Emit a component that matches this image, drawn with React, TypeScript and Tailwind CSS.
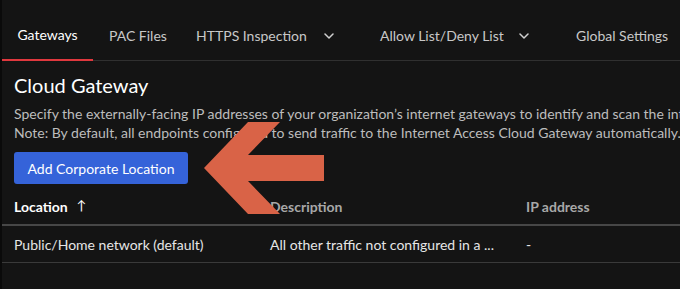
import React from "react";

function Chevron() {
  return (
    <svg width="10" height="6" viewBox="0 0 10 6" fill="none" className="block">
      <path d="M1 1l4 4 4-4" stroke="#d0d0d0" strokeWidth="1.5" strokeLinecap="round" strokeLinejoin="round" />
    </svg>
  );
}

export default function App() {
  return (
    <div
      className="relative w-[680px] h-[289px] overflow-hidden bg-[#141414] border-l-2 border-[#0a0a0a] text-[14px]"
      style={{ fontFamily: "Lato, 'Noto Sans', sans-serif" }}
    >
      {/* Tabs */}
      <div className="flex h-[61px] border-b border-[#303030] whitespace-nowrap">
        <div className="flex items-center justify-center w-[91px] pt-[10px] border-b-2 border-[#e0383e] text-white -mb-px">
          Gateways
        </div>
        <div className="flex items-center w-[87px] pt-[10px] pl-4 text-[#c8c8c8]">PAC Files</div>
        <div className="flex items-center w-[184px] pt-[10px] pl-4 text-[#c8c8c8]">
          <span className="w-[128px]">HTTPS Inspection</span>
          <span className="pt-[1px]"><Chevron /></span>
        </div>
        <div className="flex items-center w-[196px] pt-[10px] pl-4 text-[#c8c8c8]">
          <span className="w-[139px]">Allow List/Deny List</span>
          <span className="pt-[1px]"><Chevron /></span>
        </div>
        <div className="flex items-center pt-[10px] pl-4 text-[#c8c8c8]">Global Settings</div>
      </div>

      {/* Content */}
      <div className="px-3">
        <h1 className="mt-[11px] text-[20px] leading-[26px] text-white">Cloud Gateway</h1>
        <div className="mt-[6px] text-[#bdbdbd] leading-[19px] whitespace-nowrap">
          <p>Specify the externally-facing IP addresses of your organization’s internet gateways to identify and scan the internet traffic.</p>
          <p>Note: By default, all endpoints configured to send traffic to the Internet Access Cloud Gateway automatically.</p>
        </div>
        <button className="mt-[10px] h-[32px] w-[174px] rounded-[3px] bg-[#3563d9] text-white text-[14px]">
          Add Corporate Location
        </button>
      </div>

      {/* Table */}
      <div className="mt-[8px]">
        <div className="grid grid-cols-[256px_256px_1fr] h-[34px] items-center pb-[4px] border-b-2 border-[#474747] px-3 font-bold">
          <div className="text-white flex items-center">
            Location <span className="ml-[9px] font-normal text-[13px]">↑</span>
          </div>
          <div className="text-[#a8a8a8]">Description</div>
          <div className="text-[#a8a8a8]">IP address</div>
        </div>
        <div className="grid grid-cols-[256px_256px_1fr] h-[37px] items-center border-b border-[#3a3a3a] px-3 text-[#e6e6e6]">
          <div>Public/Home network (default)</div>
          <div>All other traffic not configured in a ...</div>
          <div>-</div>
        </div>
      </div>

      {/* Annotation arrow */}
      <svg
        className="absolute left-0 top-0 pointer-events-none"
        width="680"
        height="289"
        viewBox="0 0 680 289"
      >
        <polygon
          points="202,168 246,122 278,122 246,155 322,155 322,181 246,181 278,214 246,214"
          fill="#d96347"
        />
      </svg>
    </div>
  );
}
